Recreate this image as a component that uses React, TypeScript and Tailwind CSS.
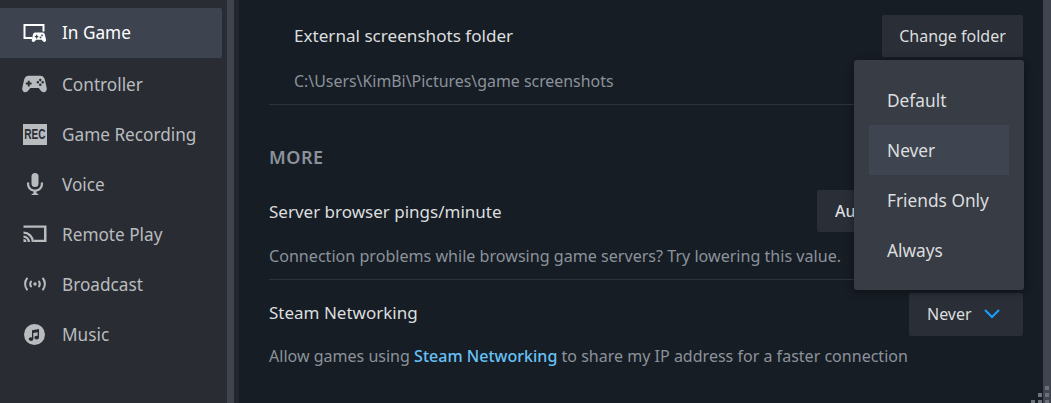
import React from "react";

const Gamepad = ({ className }: { className?: string }) => (
  <svg viewBox="0 0 26 18" className={className} fill="currentColor">
    <path fillRule="evenodd" d="M7 0.5h12c2.6 0 4 1.3 4.8 4l1.900 8.600c.4 2.400-.9 4.400-3 4.400-1.700 0-2.800-1-3.900-2.400l-1.400-1.900H8.600l-1.400 1.900C6.100 16.500 5 17.500 3.300 17.500c-2.100 0-3.400-2-3-4.400l1.900-8.600C3 1.800 4.400.5 7 .5zM6 5.500v2H4v2h2v2h2v-2h2v-2H8v-2zM19 3.500a1.300 1.300 0 100 2.600 1.300 1.300 0 000-2.600zM16.500 6a1.300 1.300 0 100 2.600 1.300 1.300 0 000-2.600zM21.500 6a1.300 1.300 0 100 2.600 1.300 1.300 0 000-2.600zM19 8.500a1.300 1.300 0 100 2.600 1.300 1.300 0 000-2.600z" />
  </svg>
);

const items = [
  { label: "In Game", active: true, icon: (
    <svg viewBox="0 0 24 20" className="w-[24px] h-[20px]" fill="currentColor">
      <path d="M0.500 1H21.500V8.500H19.500V3H2.500V14H9V16H0.500Z" />
      <path fillRule="evenodd" d="M13 9.500h6.500c1.300 0 2 .7 2.300 2l1.200 5c.3 1.500-.5 2.500-1.600 2.500-1 0-1.500-.6-2.100-1.400l-.6-.9h-5.600l-.6.9c-.6.8-1.100 1.400-2.100 1.400-1.100 0-1.900-1-1.600-2.500l1.200-5c.3-1.300 1-2 2.300-2zM13 11.800v1.200h-1.200v1.200H13v1.200h1.200v-1.200h1.200V13h-1.200v-1.200zM19 11.500a.9.9 0 100 1.800.9.9 0 000-1.800zM17.500 13.500a.9.9 0 100 1.800.9.9 0 000-1.800z" />
    </svg>
  ) },
  { label: "Controller", icon: <Gamepad className="w-[26px] h-[20px]" /> },
  { label: "Game Recording", icon: (
    <span className="w-[24px] h-[21px] bg-[#b8bcbf] text-[#2a2c33] flex items-center justify-center overflow-hidden">
      <span className="font-bold text-[14px] leading-none scale-x-[0.72] [font-family:'Liberation_Sans',sans-serif]">REC</span>
    </span>
  ) },
  { label: "Voice", icon: (
    <svg viewBox="0 0 18 22" className="w-[18px] h-[22px]" fill="currentColor">
      <rect x="5.500" y="0" width="7" height="14" rx="3.500" />
      <path d="M1 9.500h2.200v1.500c0 3.300 2.500 5.500 5.800 5.500s5.800-2.200 5.800-5.500V9.500H17V11c0 4-2.800 7-6.500 7.500V20l2.500 2H5l2.500-2v-1.500C3.800 18 1 15 1 11z" />
    </svg>
  ) },
  { label: "Remote Play", icon: (
    <svg viewBox="0 0 24 18" className="w-[24px] h-[18px]" fill="currentColor">
      <path d="M0.500 0.500H23.500V17H11V14.800H21V2.700H0.500Z" />
      <path d="M0.500 6.500a10.500 10.500 0 0110.500 10.500H8.700a8.200 8.200 0 00-8.200-8.200z" />
      <path d="M0.500 10.500a6.500 6.500 0 016.500 6.500H4.800a4.300 4.300 0 00-4.300-4.300z" />
      <path d="M0.500 14a3 3 0 013 3H.5z" />
    </svg>
  ) },
  { label: "Broadcast", icon: (
    <svg viewBox="0 0 24 14" className="w-[24px] h-[14px]" fill="none" stroke="currentColor" strokeWidth="2" strokeLinecap="round">
      <path d="M4 1.500C1.500 4.500 1.500 9.500 4 12.500" />
      <path d="M20 1.500C22.500 4.500 22.500 9.500 20 12.500" />
      <path d="M8 4.500C7 6 7 8 8 9.500" />
      <path d="M16 4.500C17 6 17 8 16 9.500" />
      <circle cx="12" cy="7" r="1.700" fill="currentColor" stroke="none" />
    </svg>
  ) },
  { label: "Music", icon: (
    <svg viewBox="0 0 21 21" className="w-[21px] h-[21px]" fill="currentColor">
      <path fillRule="evenodd" d="M10.500 0a10.500 10.500 0 110 21 10.500 10.500 0 010-21zM15 5l-7 1.200v7.200a2.300 2.300 0 00-1-.2c-1.300 0-2.300.8-2.300 1.900S5.700 17 7 17s2.300-.9 2.300-2V9l4.300-.7v3.600a2.300 2.300 0 00-1-.2c-1.300 0-2.300.8-2.300 1.900s1 1.900 2.300 1.900 2.400-.9 2.400-2z" />
    </svg>
  ) },
];

const Row = ({ item }: { item: (typeof items)[number] }) => (
  <div className={`h-[50px] flex items-center rounded-r-[2px] ${item.active ? "bg-[#3d4450] text-white mb-px" : "text-[#b8bcbf]"}`}>
    <div className="w-[62px] pl-[22px] shrink-0 flex"><div className="w-[25px] flex items-center justify-center">{item.icon}</div></div>
    <span className={`text-[17.2px] ${item.active ? "" : "translate-y-px"}`}>{item.label}</span>
  </div>
);

const Dot = ({ on }: { on?: boolean }) => <div className={`w-[4px] h-[4px] ${on ? "bg-[#6b7079]" : ""}`} />;

export default function App() {
  return (
    <div className="relative w-[1051px] h-[403px] overflow-hidden flex bg-[#171d25] text-[17px] [font-family:'Noto_Sans',sans-serif]">
      <aside className="w-[227px] shrink-0 bg-[#2a2c33] pt-[8px] pr-[5px]">
        {items.map((it) => <Row key={it.label} item={it} />)}
      </aside>
      <div className="w-[7px] shrink-0 bg-[#40444f]" />
      <div className="w-[5px] shrink-0 bg-[#23262e]" />
      <main className="flex-1 pl-[30px] pr-[20px] min-w-0">
        <div className="pl-[26px] h-[105px] border-b border-[#2e333b]">
          <div className="flex items-center justify-between pt-[15px]">
            <span className="text-[#dcdedf] text-[17.1px] -ml-px">External screenshots folder</span>
            <button className="h-[42px] w-[141px] bg-[#2a2e37] rounded-[2px] text-[#dcdedf] text-[16px]">Change folder</button>
          </div>
          <div className="mt-[13px] -ml-px text-[#8b929a] text-[15.9px]">C:\Users\KimBi\Pictures\game screenshots</div>
        </div>
        <div className="mt-[39px] h-[26px] text-[18px] font-semibold text-[#8b929a] tracking-[0.5px]">MORE</div>
        <div className="mt-[20px] flex items-center justify-between h-[42px]">
          <span className="text-[#dcdedf] translate-y-px">Server browser pings/minute</span>
          <button className="h-[42px] w-[206px] bg-[#2a2e37] rounded-[2px] text-[#dcdedf] text-[16px] font-medium text-left pl-[18px]">Au</button>
        </div>
        <div className="mt-[12px] h-[36px] border-b border-[#2e333b] text-[#8b929a] text-[16.1px]">Connection problems while browsing game servers? Try lowering this value.</div>
        <div className="mt-[13px] flex items-center justify-between h-[42px]">
          <span className="text-[#dcdedf] -translate-y-px">Steam Networking</span>
          <button className="h-[43px] w-[114px] bg-[#2a2e37] rounded-[2px] text-[#dcdedf] text-[16px] flex items-center pl-[18px] gap-[12px]">
            <span>Never</span>
            <svg viewBox="0 0 16 10" className="w-[16px] h-[10px]" fill="none" stroke="#1a9fff" strokeWidth="2"><path d="M1 1l7 7 7-7" /></svg>
          </button>
        </div>
        <div className="mt-[9px] text-[#8b929a] text-[16.05px]">Allow games using <span className="text-[#67c1f5] font-medium">Steam Networking</span> to share my IP address for a faster connection</div>
      </main>
      <div className="w-[8px] shrink-0 bg-[#3f444e]" />
      <div className="absolute left-[854px] top-[60px] w-[170px] h-[230px] bg-[#383c45] rounded-[3px] py-[15px] px-[15px] shadow-[0_2px_8px_rgba(0,0,0,0.4)]">
        {["Default", "Never", "Friends Only", "Always"].map((o) => (
          <div key={o} className={`h-[50px] flex items-center pl-[18px] text-[17.3px] text-[#dcdedf] ${o === "Never" ? "bg-[#3f4550]" : ""}`}><span className="translate-y-px">{o}</span></div>
        ))}
      </div>
      <div className="absolute right-[2px] bottom-[-1px] grid grid-cols-3 gap-[3px]">
        <Dot /><Dot /><Dot on />
        <Dot /><Dot on /><Dot on />
        <Dot on /><Dot on /><Dot on />
      </div>
    </div>
  );
}
